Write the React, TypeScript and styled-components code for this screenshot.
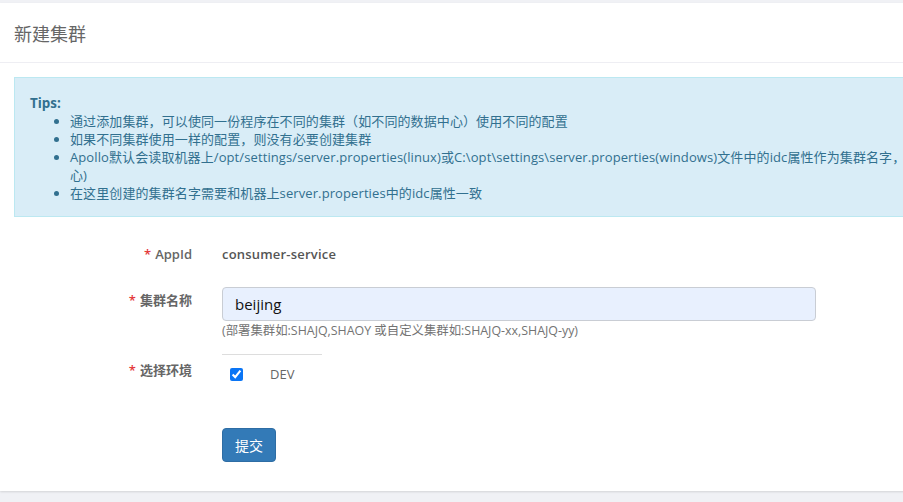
import * as React from 'react';
import styled, { createGlobalStyle } from 'styled-components';

const GlobalStyle = createGlobalStyle`
  html, body {
    margin: 0;
    padding: 0;
    background: #f0f1f5;
    overflow: hidden;
  }
  body {
    font-family: "Open Sans", "Noto Sans CJK SC", sans-serif;
    font-size: 13px;
    color: #555;
  }
`;

const Page = styled.div`
  width: 100vw;
  height: 502px;
  padding-top: 3px;
  box-sizing: border-box;
  overflow: hidden;
`;

const Panel = styled.div`
  width: 1000px;
  height: 488px;
  background: #fff;
  box-shadow: 0 1px 2px rgba(0, 0, 0, 0.12);
`;

const PanelHeader = styled.div`
  height: 59px;
  padding: 0 14px;
  display: flex;
  align-items: center;
  border-bottom: 1px solid #eeeef3;
  font-size: 18px;
  color: #666;
`;

const PanelBody = styled.div`
  padding: 14px 0 0 14px;
`;

const Alert = styled.div`
  background: #d9edf7;
  border: 1px solid #bce8f1;
  color: #31708f;
  padding: 16px 15px 14px;
  font-size: 13px;
  line-height: 18px;
`;

const TipsTitle = styled.strong`
  display: block;
  font-size: 13.4px;
`;

const TipsList = styled.ul`
  margin: 0;
  padding-left: 40px;
  & > li {
    white-space: nowrap;
    letter-spacing: 0.1px;
  }
`;

const Form = styled.form`
  margin-top: 27px;
  display: flex;
  flex-direction: column;
`;

const Row = styled.div<{ $gap?: number }>`
  display: grid;
  grid-template-columns: 178px 30px 600px;
  margin-top: ${({ $gap }) => $gap ?? 0}px;
`;

const Label = styled.label<{ $offset?: number }>`
  grid-column: 1;
  text-align: right;
  font-weight: 600;
  color: #666;
  line-height: 20px;
  padding-top: ${({ $offset }) => $offset ?? 0}px;
  &::before {
    content: '*';
    color: #e4393c;
    margin-right: 4px;
  }
`;

const Control = styled.div`
  grid-column: 3;
  display: flex;
  flex-direction: column;
  align-items: flex-start;
`;

const StaticValue = styled.div`
  font-weight: 600;
  color: #555;
  line-height: 20px;
  letter-spacing: 0.2px;
`;

const TextInput = styled.input`
  box-sizing: border-box;
  width: 594px;
  height: 34px;
  padding: 0 12px;
  border: 1px solid #c9cdd4;
  border-radius: 4px;
  background: #e8f0fe;
  font-family: "Open Sans", "Noto Sans CJK SC", sans-serif;
  font-size: 15px;
  color: #111;
  outline: none;
`;

const HelpText = styled.span`
  font-size: 12.4px;
  line-height: 17px;
  color: #737373;
  margin-top: 1px;
`;

const Divider = styled.div`
  width: 100px;
  height: 1px;
  background: #ddd;
`;

const EnvRow = styled.label`
  display: flex;
  align-items: center;
  height: 20px;
  margin-top: 9px;
  padding-left: 8px;
  color: #666;
  font-size: 13px;
`;

const Checkbox = styled.input`
  width: 13px;
  height: 13px;
  margin: 0 27px 0 0;
  accent-color: #0a75f5;
`;

const SubmitButton = styled.button`
  width: 54px;
  height: 34px;
  border: 1px solid #2e6da4;
  border-radius: 4px;
  background: #337ab7;
  color: #fff;
  font-family: "Open Sans", "Noto Sans CJK SC", sans-serif;
  font-size: 14px;
  padding: 0;
  cursor: pointer;
`;

export default function App() {
  const [name, setName] = React.useState('beijing');
  const [dev, setDev] = React.useState(true);

  return (
    <>
      <GlobalStyle />
      <Page>
        <Panel>
          <PanelHeader>新建集群</PanelHeader>
          <PanelBody>
            <Alert>
              <TipsTitle>Tips:</TipsTitle>
              <TipsList>
                <li>通过添加集群，可以使同一份程序在不同的集群（如不同的数据中心）使用不同的配置</li>
                <li>如果不同集群使用一样的配置，则没有必要创建集群</li>
                <li>
                  Apollo默认会读取机器上/opt/settings/server.properties(linux)或C:\opt\settings\server.properties(windows)文件中的idc属性作为集群名字，如SHAJQ(金桥数据中心)、SHAOY(欧阳数据中
                  <br />
                  心)
                </li>
                <li>在这里创建的集群名字需要和机器上server.properties中的idc属性一致</li>
              </TipsList>
            </Alert>
            <Form onSubmit={(e) => e.preventDefault()}>
              <Row>
                <Label>AppId</Label>
                <Control>
                  <StaticValue>consumer-service</StaticValue>
                </Control>
              </Row>
              <Row $gap={23}>
                <Label $offset={3}>集群名称</Label>
                <Control>
                  <TextInput
                    value={name}
                    onChange={(e) => setName(e.target.value)}
                  />
                  <HelpText>
                    (部署集群如:SHAJQ,SHAOY 或自定义集群如:SHAJQ-xx,SHAJQ-yy)
                  </HelpText>
                </Control>
              </Row>
              <Row $gap={15}>
                <Label $offset={6}>选择环境</Label>
                <Control>
                  <Divider />
                  <EnvRow>
                    <Checkbox
                      type="checkbox"
                      checked={dev}
                      onChange={(e) => setDev(e.target.checked)}
                    />
                    DEV
                  </EnvRow>
                </Control>
              </Row>
              <Row $gap={44}>
                <Control>
                  <SubmitButton type="submit">提交</SubmitButton>
                </Control>
              </Row>
            </Form>
          </PanelBody>
        </Panel>
      </Page>
    </>
  );
}
